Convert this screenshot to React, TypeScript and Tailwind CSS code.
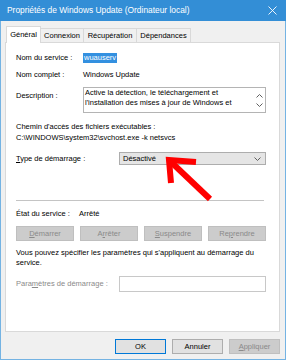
import React from "react";

const tabs = [
  { label: "Connexion", w: "w-[43px]" },
  { label: "Récupération", w: "w-[53px]" },
  { label: "Dépendances", w: "w-[54px]" },
];

function Chevron({ up }: { up?: boolean }) {
  return (
    <svg width="7" height="4" viewBox="0 0 7 4" className="block">
      <path
        d={up ? "M0.5 3.5 L3.5 0.5 L6.5 3.5" : "M0.5 0.5 L3.5 3.5 L6.5 0.5"}
        fill="none"
        stroke="#606060"
        strokeWidth="1"
      />
    </svg>
  );
}

export default function App() {
  return (
    <div className="relative flex h-[360px] w-[286px] flex-col overflow-hidden font-['Liberation_Sans',Arial,sans-serif] text-[7.5px] text-black">
      {/* title bar */}
      <div className="flex h-[21px] shrink-0 items-center justify-between bg-[#338ed6] pl-[7px] pr-[9px] text-white">
        <span className="text-[8.4px] leading-none">Propriétés de Windows Update (Ordinateur local)</span>
        <svg width="9" height="9" viewBox="0 0 9 9">
          <path d="M0.5 0.5 L8.5 8.5 M8.5 0.5 L0.5 8.5" stroke="#ffffff" strokeWidth="0.9" />
        </svg>
      </div>

      <div className="flex flex-1 flex-col border-x border-b border-[#74b3e3] bg-[#f0f0f0] pl-[4px] pr-[5px]">
        {/* tabs */}
        <div className="relative z-10 -mb-px mt-[5px] flex h-[17px] items-end pl-[1px]">
          <div className="flex h-[17px] w-[35px] items-center justify-center border-x border-t border-[#d9d9d9] bg-white pb-[1px]">
            Général
          </div>
          {tabs.map((t) => (
            <div
              key={t.label}
              className={`mb-px flex h-[14px] items-center justify-center border-t border-r border-[#d9d9d9] bg-[#f0f0f0] ${t.w}`}
            >
              {t.label}
            </div>
          ))}
        </div>

        {/* panel */}
        <div className="flex h-[290px] flex-col border border-[#d9d9d9] bg-white pl-[10px] pt-[9px]">
          <div className="flex h-[11px] items-center">
            <span className="w-[67px]">Nom du service :</span>
            <span className="bg-[#3390e0] px-[1px] leading-[10px] text-white">wuauserv</span>
          </div>
          <div className="mt-[6px] flex h-[11px] items-center">
            <span className="w-[67px]">Nom complet :</span>
            <span>Windows Update</span>
          </div>
          <div className="mt-[7px] flex items-start">
            <span className="w-[67px] pt-[4px] leading-[10px]">Description :</span>
            <div className="flex h-[26px] w-[183px] border border-[#b4b4b4]">
              <p className="flex-1 pl-[1px] leading-[9.5px]">
                Active la détection, le téléchargement et
                <br />
                l'installation des mises à jour de Windows et
              </p>
              <div className="flex w-[12px] flex-col items-center justify-between pb-[5px] pt-[6px]">
                <Chevron up />
                <Chevron />
              </div>
            </div>
          </div>
          <p className="mt-[8px] leading-[11px]">Chemin d'accès des fichiers exécutables :</p>
          <p className="leading-[11px]">C:\WINDOWS\system32\svchost.exe -k netsvcs</p>
          <div className="mt-[9px] flex h-[13px] items-center">
            <span className="w-[103px]">
              <u>T</u>ype de démarrage :
            </span>
            <div className="flex h-[13px] w-[147px] items-center justify-between border border-[#adadad] bg-[#e5e5e5] pl-[3px] pr-[4px]">
              <span>Désactivé</span>
              <Chevron />
            </div>
          </div>

          <div className="mt-[35px] h-px w-[248px] bg-[#c4c4c4]" />

          <div className="mt-[8px] flex h-[10px] items-center">
            <span className="w-[63px]">État du service :</span>
            <span>Arrêté</span>
          </div>
          <div className="mt-[7px] flex gap-[6px] text-[#8a8a8a]">
            <div className="flex h-[15px] w-[58px] items-center justify-center border border-[#bfbfbf] bg-[#cccccc]">
              <span><u>D</u>émarrer</span>
            </div>
            <div className="flex h-[15px] w-[58px] items-center justify-center border border-[#bfbfbf] bg-[#cccccc]">
              <span>A<u>r</u>rêter</span>
            </div>
            <div className="flex h-[15px] w-[58px] items-center justify-center border border-[#bfbfbf] bg-[#cccccc]">
              <span><u>S</u>uspendre</span>
            </div>
            <div className="flex h-[15px] w-[58px] items-center justify-center border border-[#bfbfbf] bg-[#cccccc]">
              <span>Re<u>p</u>rendre</span>
            </div>
          </div>
          <p className="mt-[7px] leading-[10px]">
            Vous pouvez spécifier les paramètres qui s'appliquent au démarrage du
            <br />
            service.
          </p>
          <div className="mt-[8px] flex h-[16px] items-center">
            <span className="w-[103px] text-[#8a8a8a]">
              Para<u>m</u>ètres de démarrage :
            </span>
            <div className="h-[16px] w-[147px] border border-[#c8c8c8] bg-white" />
          </div>
        </div>

        {/* dialog buttons */}
        <div className="mt-[7px] flex justify-end gap-[6px]">
          <div className="flex h-[15px] w-[51px] items-center justify-center border border-[#0078d7] bg-[#e1e1e1]">
            OK
          </div>
          <div className="flex h-[15px] w-[51px] items-center justify-center border border-[#adadad] bg-[#e1e1e1]">
            Annuler
          </div>
          <div className="flex h-[15px] w-[51px] items-center justify-center border border-[#bfbfbf] bg-[#cccccc] text-[#8a8a8a]">
            <span><u>A</u>ppliquer</span>
          </div>
        </div>
      </div>

      {/* red annotation arrow */}
      <svg
        className="pointer-events-none absolute left-0 top-0"
        width="286"
        height="360"
        viewBox="0 0 286 360"
      >
        <path d="M170 161 L210 199" stroke="#ff0000" strokeWidth="6" fill="none" />
        <path
          d="M196 162 L169 160 L171 183"
          stroke="#ff0000"
          strokeWidth="6"
          fill="none"
          strokeLinejoin="miter"
        />
      </svg>
    </div>
  );
}
